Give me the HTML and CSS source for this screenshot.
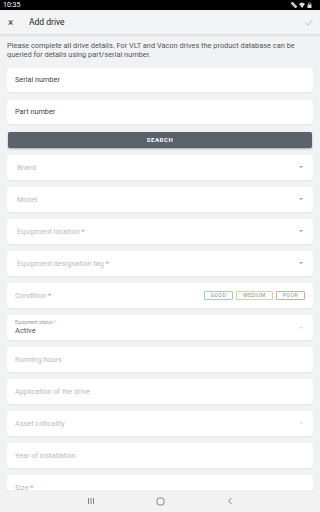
FILE: index.html
```html
<!DOCTYPE html>
<html lang="en">
<head>
  <meta charset="UTF-8" />
  <meta name="viewport" content="width=device-width, initial-scale=1.0" />
  <title>Add drive</title>
  <link rel="stylesheet" href="styles.css">
</head>
<body>
  <div class="status-bar">
    <span>10:35</span>
    <div class="status-icons">
      <svg width="6" height="6" viewBox="0 0 6 6"><path d="M0 1 L5 6 M1 0 L6 5" stroke="#ddd" stroke-width="1.2"/></svg>
      <svg width="6" height="6" viewBox="0 0 6 6"><path d="M0 2 Q3 -1 6 2 L3 6 Z" fill="#ddd"/></svg>
      <svg width="5" height="6" viewBox="0 0 5 6"><rect x="0.5" y="2.5" width="4" height="3.5" fill="#ddd"/><path d="M1.3 2.5 V1.5 Q2.5 0 3.7 1.5 V2.5" stroke="#ddd" fill="none" stroke-width="0.8"/></svg>
    </div>
  </div>

  <header class="app-bar">
    <span class="close">×</span>
    <span class="title">Add drive</span>
    <svg class="check" width="8" height="7" viewBox="0 0 8 7"><path d="M0.5 3.8 L2.8 6 L7.5 0.8" stroke="#aaa" stroke-width="0.8" fill="none"/></svg>
  </header>

  <main class="content">
    <p class="intro">Please complete all drive details. For VLT and Vacon drives the product database can be queried for details using part/serial number.</p>

    <div class="field"><span class="value">Serial number</span></div>
    <div class="field"><span class="value">Part number</span></div>
    <button class="search-btn">SEARCH</button>

    <div class="field select"><span class="placeholder">Brand</span><i class="caret"></i></div>
    <div class="field select"><span class="placeholder">Model</span><i class="caret"></i></div>
    <div class="field select"><span class="placeholder">Equipment location <b>*</b></span><i class="caret"></i></div>
    <div class="field select"><span class="placeholder">Equipment designation tag <b>*</b></span><i class="caret"></i></div>

    <div class="field">
      <span class="placeholder">Condition <b>*</b></span>
      <div class="chips">
        <span class="chip good">GOOD</span>
        <span class="chip medium">MEDIUM</span>
        <span class="chip poor">POOR</span>
      </div>
    </div>

    <div class="field status">
      <div class="stack">
        <span class="small-label">Equipment status <b>*</b></span>
        <span class="active">Active</span>
      </div>
      <i class="caret faint"></i>
    </div>

    <div class="field"><span class="placeholder">Running hours</span></div>
    <div class="field"><span class="placeholder">Application of the drive</span></div>
    <div class="field"><span class="placeholder">Asset criticality</span><i class="caret faint"></i></div>
    <div class="field"><span class="placeholder">Year of installation</span></div>
    <div class="field"><span class="placeholder">Size <b>*</b></span></div>
  </main>

  <nav class="nav-bar">
    <svg width="8" height="8" viewBox="0 0 8 8"><path d="M1.5 1 V7 M4 1 V7 M6.5 1 V7" stroke="#666" stroke-width="0.8"/></svg>
    <svg width="9" height="9" viewBox="0 0 9 9"><rect x="1" y="1" width="7" height="7" rx="2.5" stroke="#666" stroke-width="0.8" fill="none"/></svg>
    <svg width="8" height="8" viewBox="0 0 8 8"><path d="M5.5 1 L2.5 4 L5.5 7" stroke="#666" stroke-width="0.8" fill="none"/></svg>
  </nav>
</body>
</html>
```

FILE: styles.css
```css
* { box-sizing: border-box; margin: 0; padding: 0; }
html, body { height: 100%; }
body {
  font-family: Roboto, "Liberation Sans", sans-serif;
  background: #f1f2f4;
  color: #444;
  overflow: hidden;
}

.status-bar {
  height: 10px;
  background: #000;
  color: #fff;
  font-size: 7px;
  line-height: 10px;
  padding: 0 8px 0 3px;
  display: flex;
  justify-content: space-between;
  align-items: center;
}
.status-icons { display: flex; gap: 2px; align-items: center; }

.app-bar {
  height: 25px;
  background: #f3f4f6;
  border-bottom: 1px solid #dcdde0;
  box-shadow: 0 1px 2px rgba(0,0,0,0.06);
  display: flex;
  align-items: center;
  padding: 0 7px 0 8px;
}
.close { font-size: 10px; color: #333; width: 21px; }
.title { font-size: 8.5px; color: #222; flex: 1; }

.content {
  padding: 6px 7px 0 7px;
  display: flex;
  flex-direction: column;
  gap: 7.5px;
}
.intro {
  font-size: 7.4px;
  line-height: 9px;
  color: #555;
  margin-bottom: 1px;
}

.field {
  height: 24.5px;
  flex-shrink: 0;
  background: #fff;
  border-radius: 2px;
  box-shadow: 0 1px 1px rgba(0,0,0,0.05);
  display: flex;
  align-items: center;
  justify-content: space-between;
  padding: 0 8px;
  font-size: 7.3px;
}
.field.select { padding-left: 10px; }
.value { color: #444; }
.placeholder { color: #b9babd; }
.placeholder b, .small-label b { color: #f08a9a; font-weight: normal; }

.caret {
  width: 0; height: 0;
  border-left: 2.5px solid transparent;
  border-right: 2.5px solid transparent;
  border-top: 2.5px solid #999;
  margin-right: 2px;
}
.caret.faint { border-top-color: #ddd; }

.search-btn {
  height: 16px;
  flex-shrink: 0;
  margin: 0 1px;
  border: none;
  border-radius: 2px;
  background: #5a616b;
  color: #fff;
  font-family: inherit;
  font-size: 6px;
  font-weight: bold;
  letter-spacing: 0.6px;
  box-shadow: 0 1px 2px rgba(0,0,0,0.3);
}

.chips { display: flex; gap: 3px; }
.chip {
  height: 9px;
  line-height: 7px;
  border: 1px solid;
  border-radius: 1px;
  font-size: 5px;
  letter-spacing: 0.5px;
  color: #888;
  text-align: center;
}
.chip.good { border-color: #9bd8a0; width: 29px; }
.chip.medium { border-color: #f6c88a; width: 37px; }
.chip.poor { border-color: #f09a9a; width: 29px; }

.field.status { padding-top: 1px; }
.stack { display: flex; flex-direction: column; }
.small-label { font-size: 4.8px; color: #999; line-height: 6px; }
.active { font-size: 7.5px; color: #555; line-height: 9px; }

.nav-bar {
  position: fixed;
  left: 0; right: 0; bottom: 0;
  height: 22px;
  background: #f2f2f3;
  display: flex;
  justify-content: center;
  align-items: center;
  gap: 61px;
}
```
